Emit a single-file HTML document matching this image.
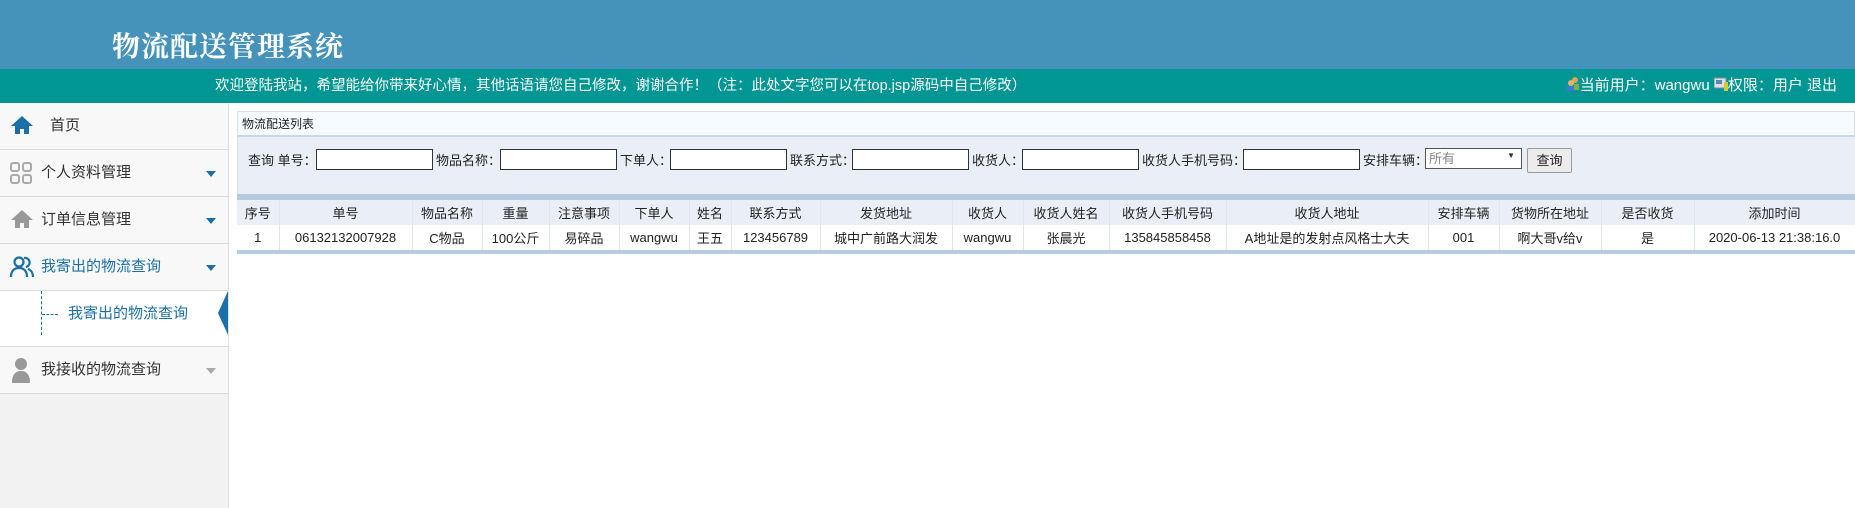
<!DOCTYPE html>
<html><head><meta charset="utf-8"><style>
*{margin:0;padding:0;box-sizing:border-box}
body{width:1855px;height:508px;overflow:hidden;background:#fff;font-family:"Liberation Sans","Noto Sans CJK SC",sans-serif;font-size:13px;color:#222;position:relative}
.hd{position:absolute;left:0;top:0;width:1855px;height:69px;background:#4592bb}
.hd h1{position:absolute;left:112px;top:31px;font-family:"Liberation Serif","Noto Serif CJK SC",serif;font-size:28px;color:#fff;font-weight:bold;line-height:34px;letter-spacing:1px}
.tb{position:absolute;left:0;top:69px;width:1855px;height:34px;background:#009694;color:#fff;font-size:14.5px;line-height:34px}
.tb .w{position:absolute;left:215px}
.tb .u{position:absolute;right:18px;font-size:15px}
.sb{position:absolute;left:0;top:103px;width:229px;height:405px;background:#f2f2f2;border-right:1px solid #e2e2e2}
.it{position:absolute;left:0;width:228px;background:#f8f8f8;border-bottom:1px solid #dcdcdc;font-size:15px;color:#333}
.it .t{position:absolute;left:41px;top:0;line-height:46px}
.it svg{position:absolute;left:10px;top:12px}
.ar{position:absolute;left:206px;top:21px;width:0;height:0;border-left:5px solid transparent;border-right:5px solid transparent;border-top:6px solid #1a6fa8}
.main{position:absolute;left:237px;top:111px;width:1618px}
.tt{height:26px;background:#f5fbfe;border:1px solid #d5e0ea;border-bottom:2px solid #c9d7e6;font-size:12px;line-height:24px;padding-left:4px}
.sr{height:57px;background:#eaeff7;border-left:1px solid #d5e0ea;position:relative;font-size:13px}
.sr span,.sr i,.sr b{position:absolute;top:14px;line-height:20px;font-style:normal;font-weight:normal}
.sr i{top:12px;height:21px;background:#fff;border:1px solid #333}
.bar{height:6px;background:#b7cbe0}
table{border-collapse:collapse;width:1618px;table-layout:fixed;font-size:13px}
td{text-align:center;height:25px;border-right:1px solid #e0e6ee;white-space:nowrap;overflow:hidden}
tr.h td{background:#eaeff7;height:25px}
tr.d td{background:#fff}
.bb{height:4px;background:#b7cbe0}
</style></head><body>
<div class="hd"><h1>物流配送管理系统</h1></div>
<div class="tb"><span class="w">欢迎登陆我站，希望能给你带来好心情，其他话语请您自己修改，谢谢合作！（注：此处文字您可以在top.jsp源码中自己修改）</span>
<span class="u"><svg width="14" height="16" viewBox="0 0 14 16" style="vertical-align:-2px"><circle cx="9" cy="4" r="3" fill="#d9a84a"/><circle cx="5" cy="7" r="3" fill="#e8b070"/><rect x="1" y="10" width="8" height="5" fill="#3a7bd5"/><rect x="8" y="8" width="5" height="6" fill="#7cb342"/></svg>当前用户：wangwu <svg width="14" height="14" viewBox="0 0 14 14" style="vertical-align:-1px"><rect x="0" y="1" width="12" height="10" fill="#dde" stroke="#889"/><rect x="2" y="3" width="6" height="4" fill="#58a"/><rect x="10" y="5" width="4" height="9" fill="#cc3"/></svg>权限：用户 退出</span></div>
<div class="sb">
<div class="it" style="top:0;height:47px"><svg width="24" height="20" viewBox="0 0 24 20"><path d="M12 1L1 11h4v8h5v-5h4v5h5v-8h4z" fill="#1a6fa8"/></svg><span class="t" style="left:50px">首页</span></div>
<div class="it" style="top:47px;height:47px"><svg width="22" height="22" viewBox="0 0 22 22" fill="none" stroke="#aaa" stroke-width="2"><rect x="1" y="1" width="8" height="8" rx="2"/><rect x="13" y="1" width="8" height="8" rx="2"/><rect x="1" y="13" width="8" height="8" rx="2"/><rect x="13" y="13" width="8" height="8" rx="2"/></svg><span class="t">个人资料管理</span><div class="ar"></div></div>
<div class="it" style="top:94px;height:47px"><svg width="24" height="20" viewBox="0 0 24 20"><path d="M12 1L1 11h4v8h5v-5h4v5h5v-8h4z" fill="#999"/></svg><span class="t">订单信息管理</span><div class="ar"></div></div>
<div class="it" style="top:141px;height:47px;color:#1a6fa8"><svg width="24" height="22" viewBox="0 0 24 22" fill="none" stroke="#1a6fa8" stroke-width="2.2"><circle cx="9" cy="6" r="4.5"/><path d="M1 21c0-6 3-9 8-9s8 3 8 9"/><path d="M14 2a4.5 4.5 0 0 1 2 9M18 13c3 1 5 4 5 8"/></svg><span class="t">我寄出的物流查询</span><div class="ar"></div></div>
<div style="position:absolute;top:188px;left:0;width:228px;height:56px;background:#fff;border-bottom:1px solid #dcdcdc">
<div style="position:absolute;left:41px;top:0;height:44px;border-left:1px dashed #1a6fa8"></div>
<div style="position:absolute;left:42px;top:23px;width:16px;border-top:1px dashed #1a6fa8"></div>
<span style="position:absolute;left:68px;top:12px;font-size:15px;color:#1a6fa8;line-height:22px">我寄出的物流查询</span>
<div style="position:absolute;right:0;top:0;width:0;height:0;border-top:22px solid transparent;border-bottom:22px solid transparent;border-right:10px solid #1a6fa8"></div></div>
<div class="it" style="top:244px;height:47px"><svg width="22" height="26" viewBox="0 0 22 26" style="top:10px"><circle cx="11" cy="7" r="6" fill="#999"/><path d="M2 26c0-9 4-12 9-12s9 3 9 12z" fill="#999"/></svg><span class="t">我接收的物流查询</span><div class="ar" style="border-top-color:#aaa"></div></div>
</div>
<div class="main">
<div class="tt">物流配送列表</div>
<div class="sr">
<span style="left:10px">查询 单号：</span><i style="left:78px;width:117px"></i>
<span style="left:198px">物品名称：</span><i style="left:262px;width:117px"></i>
<span style="left:382px">下单人：</span><i style="left:432px;width:117px"></i>
<span style="left:552px">联系方式：</span><i style="left:614px;width:117px"></i>
<span style="left:734px">收货人：</span><i style="left:784px;width:117px"></i>
<span style="left:904px">收货人手机号码：</span><i style="left:1005px;width:117px"></i>
<span style="left:1125px">安排车辆：</span><i style="left:1187px;top:11px;width:97px;height:21px;border-color:#555;color:#888;font-size:13px;line-height:19px;padding-left:3px">所有<span style="position:absolute;right:6px;top:-3px;font-size:8px;color:#333">▼</span></i>
<b style="left:1289px;top:11px;width:45px;height:25px;border:1px solid #999;background:#ececec;text-align:center;line-height:23px;border-radius:2px">查询</b>
</div>
<div class="bar"></div>
<table>
<colgroup><col style="width:42px"><col style="width:133px"><col style="width:70px"><col style="width:67px"><col style="width:70px"><col style="width:70px"><col style="width:42px"><col style="width:89px"><col style="width:132px"><col style="width:71px"><col style="width:86px"><col style="width:117px"><col style="width:202px"><col style="width:71px"><col style="width:102px"><col style="width:93px"><col style="width:161px"></colgroup>
<tr class="h"><td>序号</td><td>单号</td><td>物品名称</td><td>重量</td><td>注意事项</td><td>下单人</td><td>姓名</td><td>联系方式</td><td>发货地址</td><td>收货人</td><td>收货人姓名</td><td>收货人手机号码</td><td>收货人地址</td><td>安排车辆</td><td>货物所在地址</td><td>是否收货</td><td>添加时间</td></tr>
<tr class="d"><td>1</td><td>06132132007928</td><td>C物品</td><td>100公斤</td><td>易碎品</td><td>wangwu</td><td>王五</td><td>123456789</td><td>城中广前路大润发</td><td>wangwu</td><td>张晨光</td><td>135845858458</td><td>A地址是的发射点风格士大夫</td><td>001</td><td>啊大哥v给v</td><td>是</td><td>2020-06-13 21:38:16.0</td></tr>
</table>
<div class="bb"></div>
</div>
</body></html>
